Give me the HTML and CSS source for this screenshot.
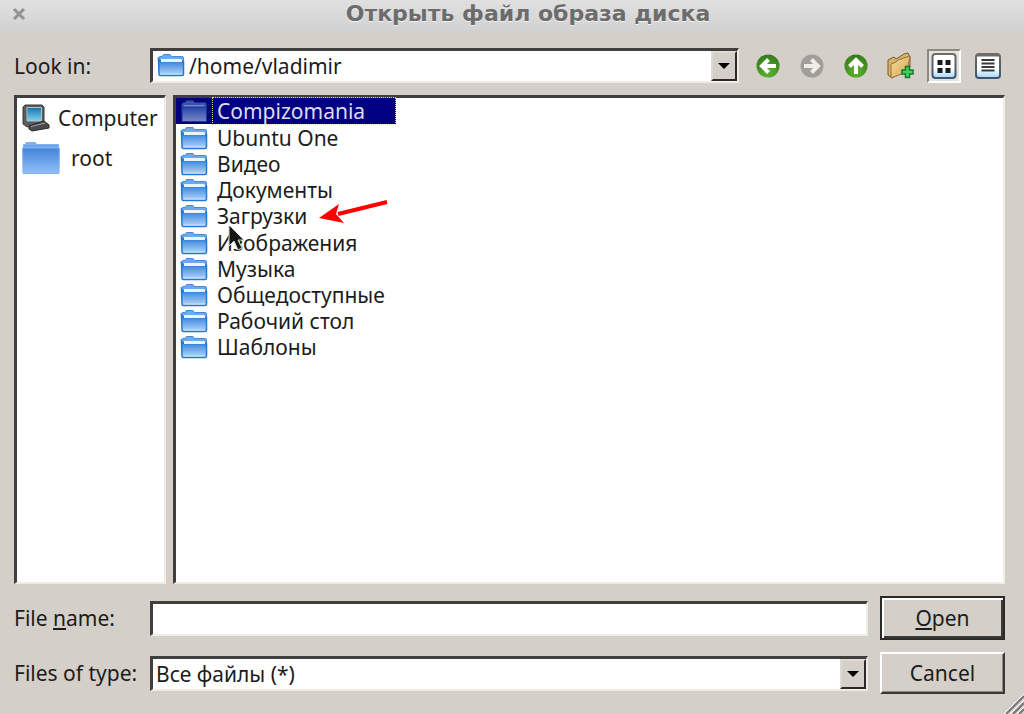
FILE: index.html
```html
<!DOCTYPE html>
<html lang="ru">
<head>
<meta charset="utf-8">
<meta name="viewport" content="width=device-width, initial-scale=1">
<title>Открыть файл образа диска</title>
<link rel="stylesheet" href="styles.css">
</head>
<body>

<!-- shared icons -->
<svg class="defs" width="0" height="0" aria-hidden="true">
  <defs>
    <linearGradient id="blue" x1="0" y1="0" x2="0" y2="1">
      <stop offset="0" stop-color="#2478da"/>
      <stop offset="1" stop-color="#b9d7f8"/>
    </linearGradient>
    <linearGradient id="big" x1="0" y1="0" x2="0" y2="1">
      <stop offset="0" stop-color="#4383da"/>
      <stop offset="1" stop-color="#93c0fa"/>
    </linearGradient>
    <linearGradient id="dim" x1="0" y1="0" x2="0" y2="1">
      <stop offset="0" stop-color="#2544a8"/>
      <stop offset="1" stop-color="#7a86c8"/>
    </linearGradient>
    <linearGradient id="screen" x1="0" y1="0" x2="0" y2="1">
      <stop offset="0" stop-color="#1673ae"/>
      <stop offset="1" stop-color="#7fd3f0"/>
    </linearGradient>
    <linearGradient id="gold" x1="0" y1="0" x2="1" y2="1">
      <stop offset="0" stop-color="#f7dc9c"/>
      <stop offset="1" stop-color="#d3a555"/>
    </linearGradient>
    <radialGradient id="green" cx="0.5" cy="0.8" r="0.8">
      <stop offset="0" stop-color="#5db52e"/>
      <stop offset="1" stop-color="#347a1c"/>
    </radialGradient>
    <linearGradient id="face" x1="0" y1="0" x2="0" y2="1">
      <stop offset="0.6" stop-color="#fff"/>
      <stop offset="1" stop-color="#a5d3f6"/>
    </linearGradient>
    <linearGradient id="rim" x1="0" y1="0" x2="0" y2="1">
      <stop offset="0" stop-color="#6e6c6a"/>
      <stop offset="1" stop-color="#3c5570"/>
    </linearGradient>
    <symbol id="folder" viewBox="0 0 28 24">
      <path d="M1.500 4.500L3 3.500H5L6.500 1.500H13L14.500 3.500H25Q26.500 3.500 26.500 5V8H1.500Z" fill="#6fa9ea" stroke="#4389dc"/>
      <path d="M4 6H24.500V9H4Z" fill="#eaf4ff"/>
      <path d="M1.500 6L3.500 8.500H26.500V21Q26.500 22.500 25 22.500H3.500Q2 22.500 2 21Z" fill="url(#blue)" stroke="#2477d2" stroke-width="1.500"/>
      <path d="M4 8H25" stroke="#eaf4ff" stroke-width="2"/>
      <path d="M3.500 21H25" stroke="#c9e1fb"/>
    </symbol>
    <symbol id="folder-dim" viewBox="0 0 28 24">
      <path d="M1.500 6L3 3.500H5L6.500 1.500H13L14.500 3.500H25Q26.500 3.500 26.500 5V8H1.500Z" fill="#3853b2"/>
      <path d="M4 6H24.500V8H4Z" fill="#757fc6"/>
      <path d="M2 8H26.500V22.500H2Z" fill="url(#dim)" stroke="#143b9c"/>
    </symbol>
    <symbol id="folder-big" viewBox="0 0 38 34">
      <path d="M1 8V4Q1 3 2 3H3L4 1H13L15 3H36Q37 3 37 4V8Z" fill="#7eb0f0"/>
      <path d="M2 5H36" stroke="#5b97e4"/>
      <path d="M0.500 7H37.500L37 32.500H1Z" fill="url(#big)" stroke="#82b2f2"/>
    </symbol>
  </defs>
</svg>

<form class="dialog" action="#" method="get">
  <header class="titlebar">
    <button type="button" class="close" aria-label="Close">
      <svg width="14" height="14" viewBox="0 0 14 14"><path d="M2 2L12 12M12 2L2 12" stroke="#929292" stroke-width="3"/></svg>
    </button>
    <h1>Открыть файл образа диска</h1>
  </header>

  <div class="content">
    <div class="row lookin">
      <label for="lookin">Look in:</label>
      <div class="combo with-icon">
        <svg class="combo-icon" width="28" height="24"><use href="#folder"/></svg>
        <select id="lookin"><option>/home/vladimir</option></select>
        <span class="drop"></span>
      </div>
      <div class="tools">
        <button type="button" aria-label="Back">
          <svg width="24" height="24" viewBox="0 0 24 24"><circle cx="12" cy="12" r="11.500" fill="url(#green)"/><path d="M20 12H8M12.500 5.500L6 12L12.500 18.500" fill="none" stroke="#fff" stroke-width="4"/></svg>
        </button>
        <button type="button" aria-label="Forward" disabled>
          <svg width="24" height="24" viewBox="0 0 24 24"><circle cx="12" cy="12" r="11.500" fill="#a09e9a"/><path d="M4 12H16M11.500 5.500L18 12L11.500 18.500" fill="none" stroke="#eeece8" stroke-width="4"/></svg>
        </button>
        <button type="button" aria-label="Parent directory">
          <svg width="24" height="24" viewBox="0 0 24 24"><circle cx="12" cy="12" r="11.500" fill="url(#green)"/><path d="M12 20V8M5.500 12.500L12 6L18.500 12.500" fill="none" stroke="#fff" stroke-width="4"/></svg>
        </button>
        <button type="button" aria-label="Create new folder">
          <svg width="28" height="28" viewBox="0 0 28 28">
            <path d="M2 8L8 5L10 7L18 2L22 1L24 5V15L6 26L2 23Z" fill="#d9b36c" stroke="#79592a"/>
            <path d="M5 12L10 10L12 8L24 4L21 20L5 26Z" fill="url(#gold)" stroke="#94703a"/>
            <path d="M19.500 14.500H23.500V18H27V22H23.500V25.500H19.500V22H16V18H19.500Z" fill="#3ed45f" stroke="#14752b" stroke-width="1.500"/>
          </svg>
        </button>
        <button type="button" class="pressed" aria-label="List view" aria-pressed="true">
          <svg width="26" height="28" viewBox="0 0 26 28">
            <rect x="1.500" y="2" width="23" height="24" rx="3" fill="url(#face)" stroke="url(#rim)" stroke-width="2"/>
            <path d="M6.500 8h5v5h-5zM14.500 8h5v5h-5zM6.500 16h5v5h-5zM14.500 16h5v5h-5z" fill="#1c1c1c"/>
          </svg>
        </button>
        <button type="button" aria-label="Detail view">
          <svg width="28" height="28" viewBox="0 0 28 28">
            <rect x="2" y="2" width="24" height="24" rx="3" fill="url(#face)" stroke="url(#rim)" stroke-width="2"/>
            <path d="M3 3H25" stroke="#6e6c6a" stroke-width="3"/>
            <path d="M7.500 8H20.500M7.500 11.500H20.500M7.500 15H20.500M7.500 18.500H20.500" stroke="#3a3a3a" stroke-width="2"/>
          </svg>
        </button>
      </div>
    </div>

    <div class="panels">
      <ul class="places">
        <li><button type="button">
          <svg width="28" height="28" viewBox="0 0 28 28">
            <path d="M1 3L3 1H20L22 3V17L20 19L5 23L1 20Z" fill="#5a5d5e" stroke="#373a3b"/>
            <path d="M5 3.500H19.500V17H5Z" fill="url(#screen)" stroke="#b4c0c4"/>
            <path d="M7 22L22 17L27 21V24L10 27L7 25Z" fill="#4b4b4b" stroke="#262626"/>
            <path d="M9 22.500L23 19" stroke="#a5a5a5"/>
          </svg>
          Computer</button></li>
        <li><button type="button" class="root"><svg width="38" height="34"><use href="#folder-big"/></svg>root</button></li>
      </ul>
      <ul class="files">
        <li class="selected"><button type="button"><svg width="28" height="24"><use href="#folder-dim"/></svg><span>Compizomania</span></button></li>
        <li><button type="button"><svg width="28" height="24"><use href="#folder"/></svg><span>Ubuntu One</span></button></li>
        <li><button type="button"><svg width="28" height="24"><use href="#folder"/></svg><span>Видео</span></button></li>
        <li><button type="button"><svg width="28" height="24"><use href="#folder"/></svg><span>Документы</span></button></li>
        <li class="marked">
          <button type="button"><svg width="28" height="24"><use href="#folder"/></svg><span>Загрузки</span></button>
          <svg class="arrow" width="72" height="26" viewBox="0 0 72 26"><path d="M69 3L20 15" stroke="#f00" stroke-width="4"/><path d="M1 19L21 5L18 15L26 24Z" fill="#f00"/></svg>
          <svg class="pointer" width="18" height="30" viewBox="0 0 18 30"><path d="M1 1V22L6 17L10 26L14 24L10 16H16Z" fill="#151515" stroke="#ddd"/></svg>
        </li>
        <li><button type="button"><svg width="28" height="24"><use href="#folder"/></svg><span>Изображения</span></button></li>
        <li><button type="button"><svg width="28" height="24"><use href="#folder"/></svg><span>Музыка</span></button></li>
        <li><button type="button"><svg width="28" height="24"><use href="#folder"/></svg><span>Общедоступные</span></button></li>
        <li><button type="button"><svg width="28" height="24"><use href="#folder"/></svg><span>Рабочий стол</span></button></li>
        <li><button type="button"><svg width="28" height="24"><use href="#folder"/></svg><span>Шаблоны</span></button></li>
      </ul>
    </div>

    <div class="row">
      <label for="filename">File <u>n</u>ame:</label>
      <input type="text" id="filename" name="filename">
      <button type="submit" class="btn default"><span><u>O</u>pen</span></button>
    </div>
    <div class="row">
      <label for="filetype">Files of type:</label>
      <div class="combo">
        <select id="filetype"><option>Все файлы (*)</option></select>
        <span class="drop"></span>
      </div>
      <button type="button" class="btn">Cancel</button>
    </div>
  </div>

  <svg class="grip" width="20" height="20" viewBox="0 0 20 20">
    <path d="M2 20L20 2M9 20L20 9M15 20L20 15" stroke="#777" stroke-width="2"/>
    <path d="M0 20L20 0M6 20L20 6M13 20L20 13" stroke="#fff"/>
  </svg>
</form>

</body>
</html>
```
FILE: styles.css
```css
* {
  box-sizing: border-box;
}

body {
  margin: 0;
  background: #d4cfc8;
  color: #1c1c1c;
}

body, button, input, select {
  font-family: "Noto Sans", "Open Sans", sans-serif;
  font-size: 21px;
  line-height: 26px;
}

button {
  background: none;
  border: none;
  padding: 0;
  color: inherit;
}

button svg {
  display: block;
}

.defs {
  position: absolute;
}

.dialog {
  position: relative;
  display: flex;
  flex-direction: column;
  min-height: 100vh;
}

/* title bar */
.titlebar {
  display: flex;
  align-items: center;
  height: 31px;
  padding: 0 0 4px 12px;
  background: linear-gradient(#e0e0e0, #d2d2d2);
}

.titlebar h1 {
  flex: 1;
  margin: 0;
  text-align: center;
  font: bold 22px/26px "DejaVu Sans", sans-serif;
  color: #6c6c6c;
  text-shadow: 0 1px 0 #f2f2f2;
}

.titlebar .close {
  margin-right: 6px;
}

.content {
  flex: 1;
  display: flex;
  flex-direction: column;
  gap: 12px;
  padding: 17px 19px 20px 14px;
}

.row {
  display: grid;
  grid-template-columns: 124px 1fr 125px;
  align-items: center;
  column-gap: 12px;
}

.row.lookin {
  grid-template-columns: 124px 1fr auto;
}

label {
  white-space: nowrap;
}

/* sunken fields */
.combo, input[type=text], .places, .files {
  background: #fff;
  border: 2px solid;
  border-width: 3px 2px 2px 3px;
  border-color: #403f3d #efece6 #efece6 #403f3d;
}

input[type=text] {
  width: 100%;
  height: 35px;
  padding: 0 4px;
  border-radius: 0;
}

.combo {
  position: relative;
  height: 35px;
}

.combo select {
  appearance: none;
  display: block;
  width: 100%;
  height: 30px;
  border: none;
  padding: 0 32px 0 3px;
  background: none;
  color: inherit;
}

.combo.with-icon select {
  padding-left: 36px;
}

.combo-icon {
  position: absolute;
  left: 4px;
  top: 2px;
}

.drop {
  position: absolute;
  top: 0;
  right: 0;
  bottom: 0;
  width: 26px;
  display: grid;
  place-items: center;
  background: #d4cfc8;
  border: 2px solid;
  border-color: #dedad3 #2b2a29 #2b2a29 #dedad3;
  pointer-events: none;
}

.drop::after {
  content: "";
  border: 6px solid transparent;
  border-top-color: #000;
  border-bottom: none;
}

.tools {
  display: flex;
  align-items: center;
  gap: 10px;
  height: 34px;
}

.tools button {
  display: grid;
  place-items: center;
  width: 34px;
  height: 34px;
}

.tools .pressed {
  border: 2px solid;
  border-color: #8d8a85 #fff #fff #8d8a85;
  background: #e6e3de;
}

/* lists */
.panels {
  flex: 1;
  display: grid;
  grid-template-columns: 152px 1fr;
  gap: 7px;
}

.places, .files {
  margin: 0;
  padding: 0;
  list-style: none;
}

.places {
  padding: 0 5px;
}

.places button {
  display: flex;
  align-items: center;
  gap: 8px;
  height: 40px;
}

.places .root {
  gap: 11px;
}

.files li {
  position: relative;
  width: max-content;
}

.files button {
  display: flex;
  align-items: center;
  gap: 4px;
  height: 26px;
  padding-left: 4px;
}

.files span {
  padding: 0 4px;
  border: 1px solid transparent;
}

.files .selected {
  margin-bottom: 1px;
  background: #000080;
  color: #dcdcf0;
}

.files .selected span {
  width: 184px;
  text-align: left;
  border: 1px dotted #d8d58c;
}

.files .marked {
  margin-bottom: 1px;
}

.arrow {
  position: absolute;
  left: 142px;
  top: -4px;
}

.pointer {
  position: absolute;
  left: 52px;
  top: 21px;
  z-index: 1;
}

/* push buttons */
.btn {
  height: 42px;
  border: 2px solid;
  border-color: #fff #3a3938 #3a3938 #fff;
  box-shadow: inset -1px -1px 0 #8d8a85;
}

.btn.default {
  height: 44px;
  border-color: #2b2a29;
  box-shadow: inset 2px 2px 0 #fff, inset -2px -2px 0 #3a3938;
}

.grip {
  position: absolute;
  right: 0;
  bottom: 0;
}
```
